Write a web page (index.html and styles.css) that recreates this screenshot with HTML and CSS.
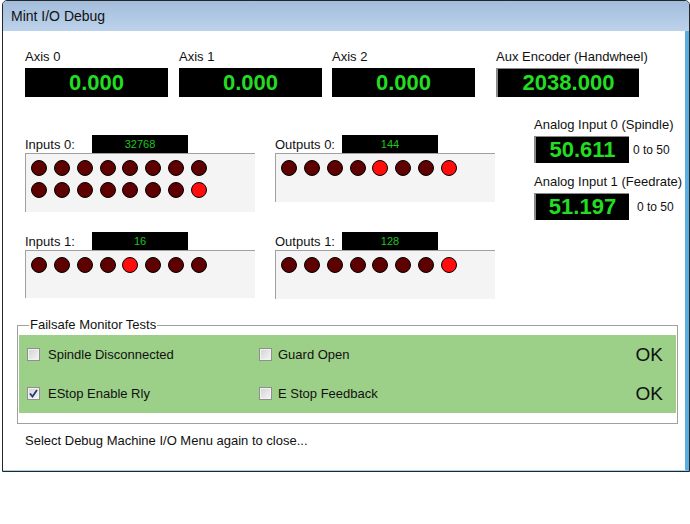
FILE: index.html
```html
<!DOCTYPE html>
<html lang="en">
<head>
    <meta charset="UTF-8">
    <title>Mint I/O Debug</title>
    <link rel="stylesheet" href="styles.css">
</head>
<body>
    <div class="window">
        <div class="titlebar">Mint I/O Debug</div>

        <div class="client">
            <!-- Axis positions -->
            <div class="axis-row">
                <div class="axis">
                    <div class="caption">Axis 0</div>
                    <div class="readout axis-value">0.000</div>
                </div>
                <div class="axis">
                    <div class="caption">Axis 1</div>
                    <div class="readout axis-value">0.000</div>
                </div>
                <div class="axis">
                    <div class="caption">Axis 2</div>
                    <div class="readout axis-value">0.000</div>
                </div>
                <div class="axis">
                    <div class="caption">Aux Encoder (Handwheel)</div>
                    <div class="readout axis-value sunken aux">2038.000</div>
                </div>
            </div>

            <div class="middle-row">
                <!-- Digital I/O -->
                <div class="io-grid">
                    <div class="io-block">
                        <div class="io-head">
                            <span class="io-label">Inputs 0:</span>
                            <span class="io-value">32768</span>
                        </div>
                        <div class="led-panel inputs tall">
                            <div class="led-row">
                                <span class="led"></span><span class="led"></span><span class="led"></span><span class="led"></span>
                                <span class="led"></span><span class="led"></span><span class="led"></span><span class="led"></span>
                            </div>
                            <div class="led-row">
                                <span class="led"></span><span class="led"></span><span class="led"></span><span class="led"></span>
                                <span class="led"></span><span class="led"></span><span class="led"></span><span class="led on"></span>
                            </div>
                        </div>
                    </div>
                    <div class="io-block">
                        <div class="io-head">
                            <span class="io-label">Outputs 0:</span>
                            <span class="io-value">144</span>
                        </div>
                        <div class="led-panel outputs">
                            <div class="led-row">
                                <span class="led"></span><span class="led"></span><span class="led"></span><span class="led"></span>
                                <span class="led on"></span><span class="led"></span><span class="led"></span><span class="led on"></span>
                            </div>
                        </div>
                    </div>
                    <div class="io-block">
                        <div class="io-head">
                            <span class="io-label">Inputs 1:</span>
                            <span class="io-value">16</span>
                        </div>
                        <div class="led-panel inputs">
                            <div class="led-row">
                                <span class="led"></span><span class="led"></span><span class="led"></span><span class="led"></span>
                                <span class="led on"></span><span class="led"></span><span class="led"></span><span class="led"></span>
                            </div>
                        </div>
                    </div>
                    <div class="io-block">
                        <div class="io-head">
                            <span class="io-label">Outputs 1:</span>
                            <span class="io-value">128</span>
                        </div>
                        <div class="led-panel outputs">
                            <div class="led-row">
                                <span class="led"></span><span class="led"></span><span class="led"></span><span class="led"></span>
                                <span class="led"></span><span class="led"></span><span class="led"></span><span class="led on"></span>
                            </div>
                        </div>
                    </div>
                </div>

                <!-- Analog inputs -->
                <div class="analog">
                    <div class="caption">Analog Input 0 (Spindle)</div>
                    <div class="analog-line">
                        <div class="readout sunken analog-value">50.611</div>
                        <span class="range">0 to 50</span>
                    </div>
                    <div class="caption second">Analog Input 1 (Feedrate)</div>
                    <div class="analog-line">
                        <div class="readout sunken analog-value">51.197</div>
                        <span class="range wide">0 to 50</span>
                    </div>
                </div>
            </div>

            <!-- Failsafe -->
            <fieldset class="failsafe">
                <legend>Failsafe Monitor Tests</legend>
                <div class="failsafe-body">
                    <label class="check"><span class="box"></span>Spindle Disconnected</label>
                    <label class="check narrow"><span class="box"></span>Guard Open</label>
                    <span class="status">OK</span>

                    <label class="check">
                        <span class="box">
                            <svg viewBox="0 0 9 9" width="9" height="9"><path d="M1 4.5 L3.5 7.5 L8 1" fill="none" stroke="#233a78" stroke-width="1.8"/></svg>
                        </span>EStop Enable Rly
                    </label>
                    <label class="check narrow"><span class="box"></span>E Stop Feedback</label>
                    <span class="status">OK</span>
                </div>
            </fieldset>

            <div class="footer-note">Select Debug Machine I/O Menu again to close...</div>
        </div>
    </div>
</body>
</html>
```

FILE: styles.css
```css
body {
    margin: 0;
    background: #fff;
    font-family: "Liberation Sans", Arial, sans-serif;
    color: #111;
}

.window {
    margin-left: 2px;
    width: 688px;
    height: 472px;
    box-sizing: border-box;
    border: 1px solid #262626;
    border-radius: 5px 5px 0 0;
    overflow: hidden;
    display: flex;
    flex-direction: column;
}

.titlebar {
    flex: none;
    height: 30px;
    line-height: 30px;
    padding-left: 8px;
    font-size: 14px;
    background: linear-gradient(#a2bddc, #bdd2ea);
}

.client {
    flex: 1;
    background: #fff;
    padding: 19px 0 0 22px;
    border-right: 4px solid #5aaee0;
    border-bottom: 1px solid #9fd0f0;
}

.caption {
    font-size: 13px;
    line-height: 14px;
    white-space: nowrap;
}

.readout {
    background: #000;
    color: #22dd22;
    font-weight: bold;
    text-align: center;
    box-sizing: border-box;
}

.sunken {
    border-left: 2px solid #8a8a8a;
    border-top: 1px solid #8a8a8a;
}

/* axis row */
.axis-row {
    display: grid;
    grid-template-columns: 154px 153px 164px 150px;
}

.axis-value {
    width: 143px;
    height: 29px;
    margin-top: 4px;
    font-size: 22px;
    line-height: 29px;
}

.axis-value.aux {
    width: 143px;
    line-height: 28px;
}

/* digital i/o + analog */
.middle-row {
    display: flex;
    margin-top: 21px;
}

.io-grid {
    margin-top: 17px;
    display: grid;
    grid-template-columns: 250px 220px;
    row-gap: 20px;
    align-items: start;
}

.io-head {
    display: flex;
    align-items: center;
    height: 18px;
}

.io-label {
    width: 67px;
    font-size: 13px;
}

.io-value {
    width: 96px;
    height: 18px;
    line-height: 18px;
    background: #000;
    color: #1fc41f;
    font-size: 11px;
    text-align: center;
}

.led-panel {
    box-sizing: border-box;
    background: #f4f4f4;
    border-top: 1px solid #a0a0a0;
    border-left: 1px solid #a0a0a0;
    padding: 6px 0 0 5px;
    display: flex;
    flex-direction: column;
    gap: 6px;
    height: 48px;
}

.led-panel.inputs {
    width: 230px;
}

.led-panel.outputs {
    width: 220px;
    height: 49px;
}

.led-panel.tall {
    height: 59px;
}

.led-row {
    display: flex;
    gap: 6.86px;
}

.led {
    width: 16px;
    height: 16px;
    box-sizing: border-box;
    border: 1px solid #000;
    border-radius: 50%;
    background: #5e0000;
}

.led.on {
    background: #ff0d0d;
}

.analog {
    margin-left: 39px;
}

.caption.second {
    margin-top: 12px;
}

.analog-line {
    display: flex;
    align-items: center;
    margin-top: 4px;
}

.analog-value {
    width: 95px;
    height: 27px;
    font-size: 22px;
    line-height: 26px;
}

.range {
    margin-left: 4px;
    font-size: 12px;
}

.range.wide {
    margin-left: 8px;
}

/* failsafe group */
.failsafe {
    margin: 19px 0 0 -8px;
    width: 661px;
    box-sizing: border-box;
    border: 1px solid #a0a0a0;
    padding: 3px 1px 10px 1px;
}

.failsafe legend {
    margin-left: 10px;
    padding: 0 1px;
    font-size: 13px;
    line-height: 14px;
}

.failsafe-body {
    background: #9ccf88;
    display: grid;
    grid-template-columns: 232px 1fr auto;
    grid-auto-rows: 39px;
    align-items: center;
    padding: 0 13px 0 8px;
}

.check {
    display: flex;
    align-items: center;
    gap: 8px;
    font-size: 13px;
}

.check.narrow {
    gap: 6px;
}

.box {
    width: 13px;
    height: 13px;
    box-sizing: border-box;
    border: 1px solid #8e8f8f;
    background: linear-gradient(135deg, #d2d2d2, #f6f6f6);
    box-shadow: inset 0 0 0 1px #f2f2f2;
    display: flex;
    align-items: center;
    justify-content: center;
}

.status {
    font-size: 19px;
    color: #111;
}

.footer-note {
    margin-top: 9px;
    font-size: 13px;
}
```
